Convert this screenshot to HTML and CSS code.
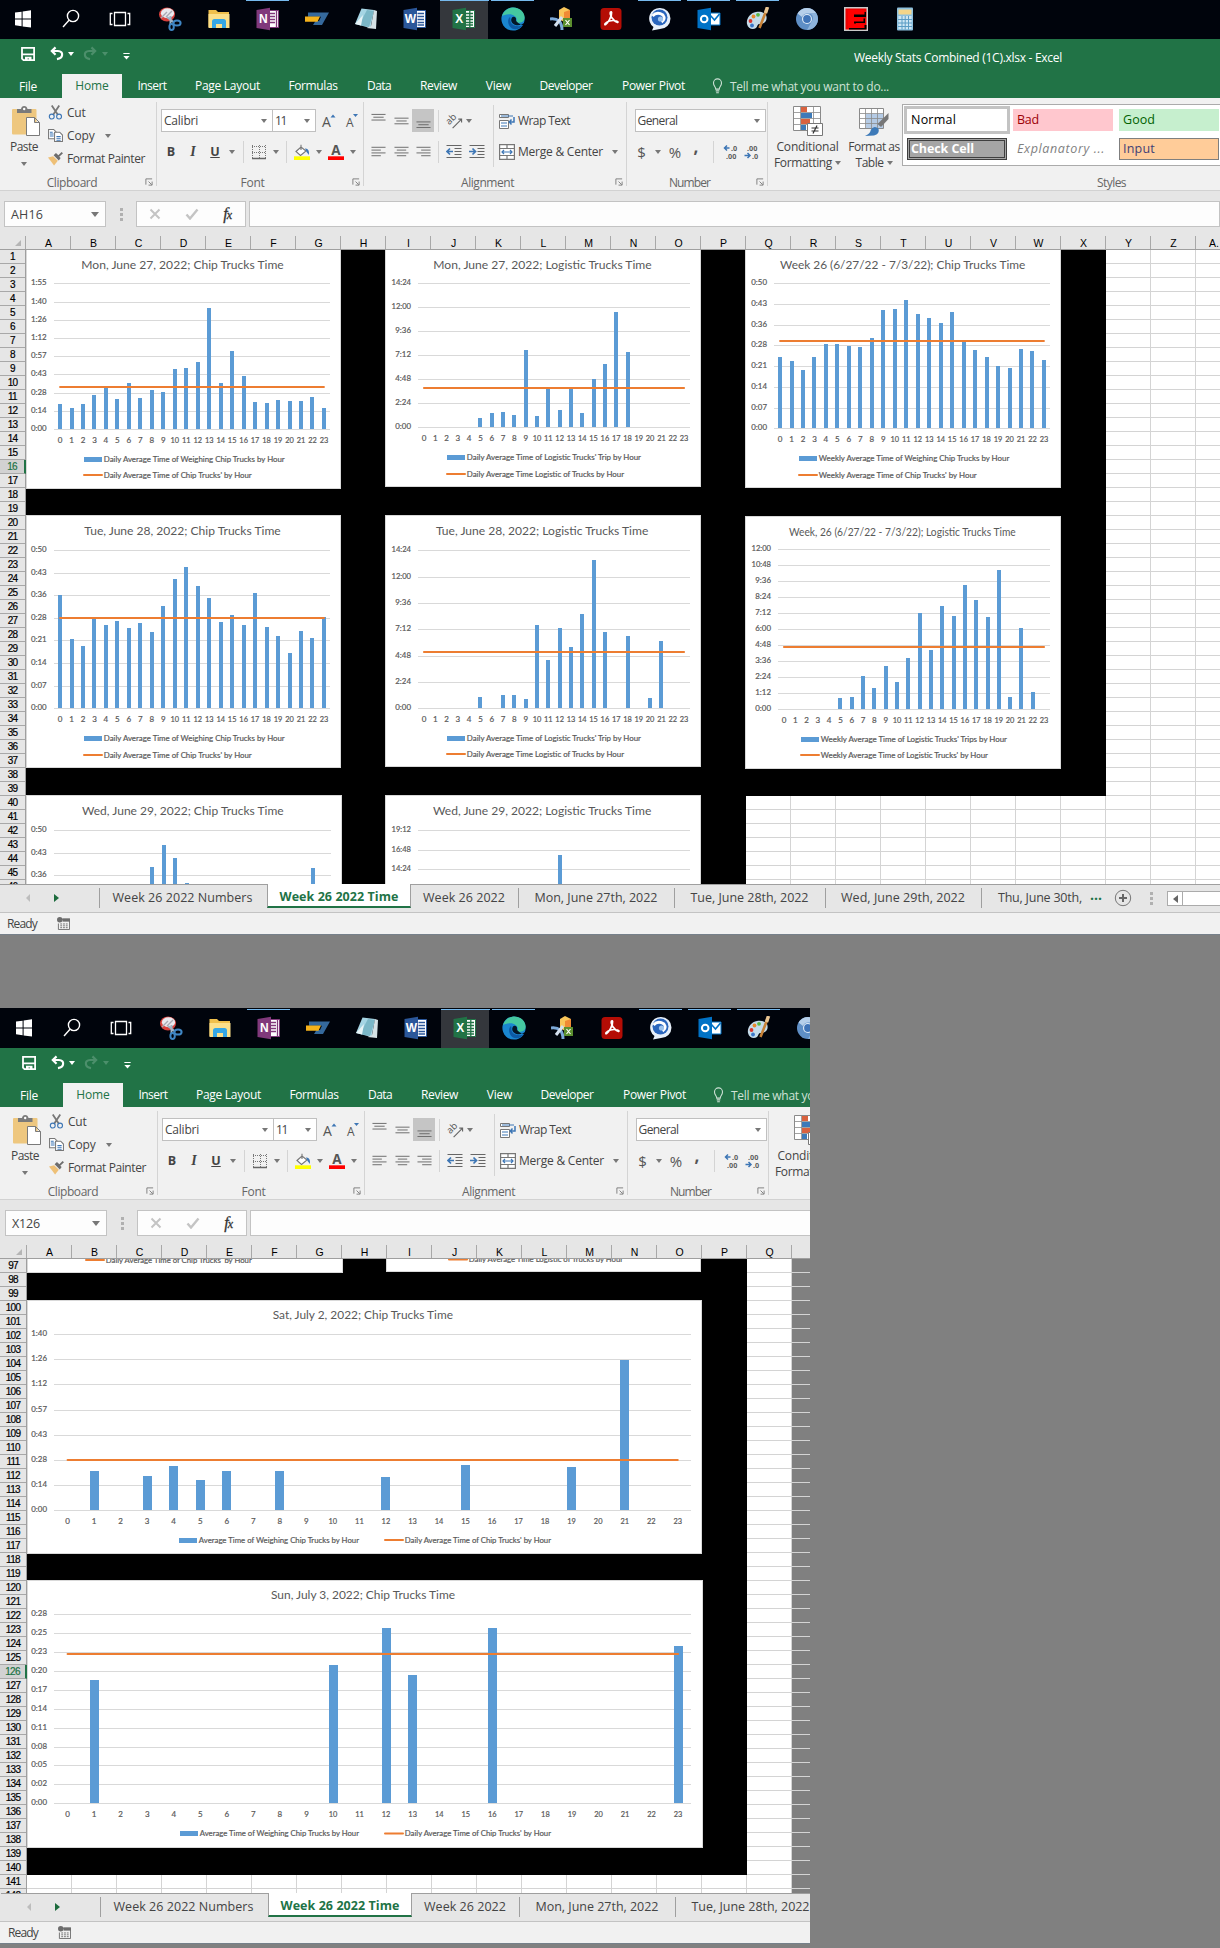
FILE: index.html
```html
<!DOCTYPE html>
<html lang="en">
<head>
<meta charset="utf-8">
<title>Weekly Stats Combined (1C).xlsx - Excel</title>
<link rel="stylesheet" href="styles.css">
</head>
<body>
<svg class="defs" aria-hidden="true">
  <symbol id="t-start" viewBox="0 0 24 24"><path fill="#fff" d="M4 5.6 10.6 4.7V11.4H4ZM11.6 4.5 20 3.3V11.4H11.6ZM4 12.4H10.6V19.2L4 18.3ZM11.6 12.4H20V20.6L11.6 19.4Z"/></symbol>
  <symbol id="t-search" viewBox="0 0 24 24"><g fill="none" stroke="#fff" stroke-width="1.4"><circle cx="14" cy="9" r="5.6"/><path d="M10 13.2 4 20"/></g></symbol>
  <symbol id="t-view" viewBox="0 0 24 24"><g fill="none" stroke="#fff" stroke-width="1.3"><path d="M6.5 5.5H17.5V18.5H6.5ZM4.5 6.5H2.3V17.5H4.5M19.5 6.5H21.7V17.5H19.5"/></g></symbol>
  <symbol id="t-snip" viewBox="0 0 24 24"><ellipse cx="9" cy="7.500" rx="8" ry="7" fill="#d8403c"/><ellipse cx="9.500" cy="6.200" rx="6.600" ry="5" fill="#e9e9ee"/><path d="M3 11 9 5M8 10 14 4" stroke="#a8a8b2" stroke-width="1.400"/><path d="M9 10 16 15.500M12.500 9V18" stroke="#9db4c8" stroke-width="2"/><g fill="none" stroke="#3f86c4" stroke-width="2"><ellipse cx="19" cy="16" rx="3.600" ry="2.600"/><ellipse cx="13.600" cy="20" rx="2.200" ry="3"/></g></symbol>
  <symbol id="t-folder" viewBox="0 0 24 24"><path fill="#f0c04c" d="M1.500 3H9L11 5H22V20H1.500Z"/><path fill="#fce08a" d="M1.500 7H22.500V21H1.500Z"/><path fill="#35a7e6" d="M5 21V14.500Q5 12 7.500 12H16.500Q19 12 19 14.500V21H15V17H9V21Z"/></symbol>
  <symbol id="t-note" viewBox="0 0 24 24"><path fill="#fff" stroke="#80397b" d="M12 3.500H22.500V20.500H12Z"/><path stroke="#80397b" stroke-width="1.300" d="M14 6.500H19M14 9.500H19M14 12.500H19M14 15.500H19M20.500 4V20"/><path fill="#80397b" d="M.5 3 14 .8V23.200L.5 21Z"/><text x="3" y="16.300" class="glyph">N</text></symbol>
  <symbol id="t-dash" viewBox="0 0 24 24"><path fill="#35699c" d="M3 5.500H24L17 18H8L10.500 14H14L16 9.800H3Z"/><path fill="#f5b21b" d="M0 9.500H15L12.500 14.800H0Z"/></symbol>
  <symbol id="t-pad" viewBox="0 0 24 24"><path fill="#a5d5e4" d="M7.500 1.500 20 3 16.500 21 1 17Z"/><path fill="#69a9bb" d="M13 3 20 4 15 20 5 18Z" opacity=".7"/><path fill="#e8f4f7" d="M1 17 9 8 7 18.500Z"/><path fill="#d6e2e6" d="M20 3 23 4 22 22 12.500 21 17 19Z"/></symbol>
  <symbol id="t-word" viewBox="0 0 24 24"><path fill="#fff" stroke="#2b579a" d="M12 3.500H22.500V20.500H12Z"/><path stroke="#2b579a" stroke-width="1.300" d="M14.500 6.500H21M14.500 9.500H21M14.500 12.500H21M14.500 15.500H21M14.500 18H21"/><path fill="#2b579a" d="M.5 3 14 .8V23.200L.5 21Z"/><text x="1.800" y="16" class="glyph">W</text></symbol>
  <symbol id="t-excel" viewBox="0 0 24 24"><path fill="#fff" stroke="#217346" d="M12 3.500H22.500V20.500H12Z"/><path stroke="#217346" stroke-width="1.300" d="M14 6.500H21M14 9.500H21M14 12.500H21M14 15.500H21M14 18H21M17.800 4V20"/><path fill="#217346" d="M.5 3 14 .8V23.200L.5 21Z"/><text x="3.200" y="16.300" class="glyph">X</text></symbol>
  <symbol id="t-edge" viewBox="0 0 24 24"><circle cx="12" cy="12" r="11.600" fill="#1a86d0"/><path fill="#45c8a0" d="M1 9C3 2.500 9 .3 12.500.4 19 .6 24 5.500 23.600 11 23.400 14.500 20 16 17 15.800 14.500 15.600 15.500 14.500 15.800 13 16 10 12 7 8 7.200 4.500 7.500 2 8.500 1 9Z"/><path fill="#0c59a4" d="M9 10C6 12 6.500 18.500 11 21.500 15 23.500 19.500 21.500 21.500 18.500 17 20 11 19 9.700 15 9 13 9.800 11 9 10Z"/><path fill="#00040c" d="M11 10.500C9 13.500 11 17 14.500 18 18 18.800 21.500 17.500 23.800 15.500L24 24 22 18C21 19 14 14.500 15 12.500 15.500 9.500 12 9 11 10.500Z" opacity=".85"/></symbol>
  <symbol id="t-key" viewBox="0 0 24 24"><path fill="#f9c65a" d="M9 3 14 0 20 3V12L14 15 9 12Z"/><path fill="#f08a34" d="M14 5 20 3V12L14 15Z"/><path fill="none" stroke="#7ca9d8" stroke-width="3" d="M0 12C8 11 12 15 12 23"/><path d="M12 10 5 19" stroke="#d4e0ee" stroke-width="3"/><path fill="#5b8f2f" d="M13 11H22V20H13Z"/><path d="M15.500 13 19.500 18M19.500 13 15.500 18" stroke="#fff" stroke-width="1.200"/></symbol>
  <symbol id="t-pdf" viewBox="0 0 24 24"><rect x="1.500" y="1" width="21" height="22" rx="3.500" fill="#b40d05"/><path fill="none" stroke="#fff" stroke-width="1.700" d="M11.500 5C10 8 15 14.500 18.500 15.500 20.500 15 16 12.500 10.500 14 6 15.500 5 18 6.500 17.700 9 16.500 13 9 12.600 5.500Q12.300 4.300 11.500 5"/></symbol>
  <symbol id="t-chat" viewBox="0 0 24 24"><path fill="#e7f0fa" d="M12 1A10.500 10.500 0 0 1 12 22L4 23.500 5.500 20A10.500 10.500 0 0 1 12 1"/><circle cx="11.500" cy="10.500" r="8" fill="#2a66bd"/><path d="M4.500 9Q9 4 15 8 18 12 13.500 15" fill="none" stroke="#fff" stroke-width="2.800"/><circle cx="12.500" cy="12" r="2.600" fill="#9dc3ec"/></symbol>
  <symbol id="t-mail" viewBox="0 0 24 24"><path fill="#fff" stroke="#0072c6" d="M12 6H23V18H12Z"/><path fill="none" stroke="#0072c6" stroke-width="1.600" d="M13 8 17.500 13 22.500 7"/><path fill="#0072c6" d="M.5 3 14 .8V23.200L.5 21Z"/><circle cx="7.200" cy="12" r="3.300" fill="none" stroke="#fff" stroke-width="2"/></symbol>
  <symbol id="t-paint" viewBox="0 0 24 24"><path fill="#c4dcea" d="M10 5C4 6 0 12 1 17 2 22 7 23 10 21 12 19 11 17 14 17 19 17 22 13 20 8 18 5 14 4.500 10 5"/><circle cx="4.500" cy="14" r="1.900" fill="#d8342c"/><circle cx="7.500" cy="9.500" r="1.900" fill="#e8892c"/><circle cx="12" cy="7.800" r="1.900" fill="#5bb747"/><circle cx="6" cy="18.500" r="1.900" fill="#3c78c8"/><path stroke="#c78238" stroke-width="2.600" d="M20.500 3 13.500 21"/><path stroke="#e9c693" stroke-width="3.500" d="M21.500 0 19.500 6"/></symbol>
  <symbol id="t-chrome" viewBox="0 0 24 24"><circle cx="12" cy="12" r="11" fill="#5f8fc6"/><path fill="#b5cfea" d="M2.500 6.500A11 11 0 0 1 21.500 6.500H12A5.500 5.500 0 0 0 7 10Z"/><path fill="#8db3dc" d="M21.500 6.500A11 11 0 0 1 12 23L17 14A5.500 5.500 0 0 0 16 7Z"/><circle cx="12" cy="12" r="5" fill="#e2edf8"/><circle cx="12" cy="12" r="3.900" fill="#3f74b8"/></symbol>
  <symbol id="t-e" viewBox="0 0 24 24"><path fill="#c9c9c9" d="M0 0H24V24H0Z"/><path fill="#e00" d="M1.500 1.500H22.500V22.500H1.500Z"/><path fill="#000" d="M5 5H22V10H12V11.500H21V16H12V18H22.500V22.500H5Z"/><path fill="#f00" d="M4 3H20.500V7.500H10V10H19.500V14.500H10V16.500H20.500V21H4Z"/></symbol>
  <symbol id="t-calc" viewBox="0 0 24 24"><rect x="4" y=".5" width="16" height="23" rx="1" fill="#8ec1df"/><path fill="#cde6f4" d="M5.500 9H18.500V22H5.500Z"/><path fill="#f3d58a" d="M5.500 2.500H18.500V7.500H5.500Z"/><path d="M5 12.500H19M5 16H19M5 19.500H19M9 9V22.500M12.200 9V22.500M15.500 9V22.500" stroke="#5b9cc4"/></symbol>

  <symbol id="q-save" viewBox="0 0 16 16"><path fill="none" stroke="#fff" stroke-width="1.800" d="M2 1.900H14.100V14.100H3.500L2 12.600Z"/><path fill="#fff" d="M2 7.500H14V9.300H2ZM5 10.800H11.500V15H9V12.600H7.500V15H5Z"/></symbol>
  <symbol id="q-undo" viewBox="0 0 16 16"><path fill="none" stroke="currentColor" stroke-width="2.300" d="M7 1.500 3 5.300 7 9.300M3 5.300H9.500C13 5.300 14.200 7.500 14 9.500 13.800 12 12 13.500 8.500 14"/></symbol>
  <symbol id="q-more" viewBox="0 0 10 10"><path fill="#fff" d="M1.500 1H8.500V2.300H1.500ZM1.500 4.500H8.500L5 8.200Z"/></symbol>
  <symbol id="bulb" viewBox="0 0 12 18"><path fill="none" stroke="#cfe2d7" stroke-width="1.200" d="M4 12.500C4 10 1.500 9 1.500 5.500A4.500 4.500 0 0 1 10.500 5.500C10.500 9 8 10 8 12.500ZM4 14.500H8M4.500 16.500H7.500"/></symbol>
  <symbol id="paste" viewBox="0 0 28 30"><rect y="3" width="24.500" height="25.500" rx="1" fill="#eec77f"/><path fill="#7a7a7a" d="M5 7V3H9Q9.500 0 12.200 0T15.500 3H19.500V7Z"/><circle cx="12.200" cy="3" r="1.200" fill="#fff"/><path fill="#fff" stroke="#7a7a7a" d="M14.500 11.500H22.500L27.500 16.500V29.500H14.500ZM22.500 11.500V16.500H27.500"/></symbol>
  <symbol id="cut" viewBox="0 0 16 16"><path d="M4 .5 10.500 10.500M12 .5 5.500 10.500" stroke="#777" stroke-width="1.900"/><circle cx="4" cy="12.300" r="2.600" fill="none" stroke="#3d76b5" stroke-width="1.200"/><circle cx="11.800" cy="12.300" r="2.600" fill="none" stroke="#3d76b5" stroke-width="1.200"/></symbol>
  <symbol id="copy" viewBox="0 0 16 16"><g fill="#fff" stroke="#777" stroke-width="1.100"><path d="M.6 1.500H6L8.500 4V11.500H.6Z"/><path d="M7 4.500H12.500L15.400 7.500V14.500H7Z"/></g><path stroke="#3d76b5" stroke-width="1.100" d="M2 4.500H5M2 6.500H6M2 8.500H6M9 9H13.500M9 11H13.500M9 13H13.500"/></symbol>
  <symbol id="brush" viewBox="0 0 16 16"><path fill="#eec077" d="M0 7 5.500 5.500 10.500 10.500 6.500 15.500Z"/><path fill="#6d6d6d" d="M6 4.500 8.500 2 11 4.500 14.500 1 16 2.500 12 6 13.500 7.500 11.500 10Z"/></symbol>
  <symbol id="launch" viewBox="0 0 9 9"><path fill="none" stroke="#777" d="M1 7.500V1H8M4 4 7.500 7.500M8 4V8H4"/></symbol>
  <symbol id="grow" viewBox="0 0 16 16"><text x="1" y="14" font-size="14" class="let">A</text><path fill="#3d76b5" d="M9.500 4.500 12 1.500 14.500 4.500Z"/></symbol>
  <symbol id="shrink" viewBox="0 0 16 16"><text x="2" y="14" font-size="12" class="let">A</text><path fill="#3d76b5" d="M9 1H14L11.500 4Z"/></symbol>
  <symbol id="borders" viewBox="0 0 16 16"><path stroke="#777" stroke-dasharray="1 1" d="M1 2.500H15M1 8.500H15M1.500 1V14M8.500 1V14M14.500 1V14"/><path stroke="#666" stroke-width="1.500" d="M1 14.500H15"/></symbol>
  <symbol id="fill" viewBox="0 0 16 16"><path fill="#fff" stroke="#777" stroke-width="1.100" d="M2 7.500 7 3 12 7 6.500 11.500ZM7 6V.8"/><path fill="#3d76b5" d="M11 4.500Q15.500 4 15 11Q12 8 11 4.500"/><path fill="#ff0" d="M0 12.300H16V16H0Z"/></symbol>
  <symbol id="fcolor" viewBox="0 0 16 16"><text x="3.200" y="11" font-size="13.500" class="let b">A</text><path fill="#f00" d="M0 12.300H16V16H0Z"/></symbol>
  <symbol id="al-t" viewBox="0 0 16 16"><path stroke="#666" d="M.5 1.500H15.500M2.500 4.500H13.500M.5 7.500H15.500"/></symbol>
  <symbol id="al-m" viewBox="0 0 16 16"><path stroke="#666" d="M.5 5.500H15.500M2.500 8.500H13.500M.5 11.500H15.500"/></symbol>
  <symbol id="al-b" viewBox="0 0 16 16"><path stroke="#666" d="M.5 9.500H15.500M2.500 12.500H13.500M.5 15.500H15.500"/></symbol>
  <symbol id="al-l" viewBox="0 0 16 16"><path stroke="#666" d="M.5 3.500H15.500M.5 6.500H10.500M.5 9.500H15.500M.5 12.500H10.500"/></symbol>
  <symbol id="al-c" viewBox="0 0 16 16"><path stroke="#666" d="M.5 3.500H15.500M3 6.500H13M.5 9.500H15.500M3 12.500H13"/></symbol>
  <symbol id="al-r" viewBox="0 0 16 16"><path stroke="#666" d="M.5 3.500H15.500M5.500 6.500H15.500M.5 9.500H15.500M5.500 12.500H15.500"/></symbol>
  <symbol id="orient" viewBox="0 0 18 16"><text x="0" y="0" font-size="10" class="let" transform="translate(3.500 12.500) rotate(-45)">ab</text><path fill="none" stroke="#666" stroke-width="1.200" d="M7 15.500 16.500 6M13 6H16.500V9.500"/></symbol>
  <symbol id="outdent" viewBox="0 0 16 16"><path stroke="#666" d="M.5 1.500H15.500M8.500 4.500H15.500M8.500 7.500H15.500M8.500 10.500H15.500M.5 13.500H15.500"/><path fill="none" stroke="#3d76b5" stroke-width="1.700" d="M7 7.500H1.500M4 4.500 1 7.500 4 10.500"/></symbol>
  <symbol id="indent" viewBox="0 0 16 16"><path stroke="#666" d="M.5 1.500H15.500M8.500 4.500H15.500M8.500 7.500H15.500M8.500 10.500H15.500M.5 13.500H15.500"/><path fill="none" stroke="#3d76b5" stroke-width="1.700" d="M0 7.500H6M3.500 4.500 6.500 7.500 3.500 10.500"/></symbol>
  <symbol id="wrap" viewBox="0 0 16 16"><path fill="#fff" stroke="#777" d="M.5 1.500H9.500V4.500H.5ZM.5 7.500H9.500V15.500H.5Z"/><path stroke="#3d76b5" d="M2 3H14M2 10H8M2 13H8"/><path fill="none" stroke="#3d76b5" stroke-width="1.500" d="M15 4V9H10.500M12.500 6.500 10.300 9 12.500 11.500"/></symbol>
  <symbol id="merge" viewBox="0 0 16 16"><path fill="#fff" stroke="#777" stroke-width="1.200" d="M.6.6H15.400V15.400H.6ZM.6 4.500H15.400M.6 11.500H15.400M8 .6V4.500M8 11.500V15.400"/><path fill="none" stroke="#3d76b5" stroke-width="1.200" d="M3 8H13M5 6 3 8 5 10M11 6 13 8 11 10"/></symbol>
  <symbol id="dec-up" viewBox="0 0 16 16"><text x="8" y="7" class="num">.0</text><text x="3" y="15" class="num">.00</text><path fill="none" stroke="#3d76b5" stroke-width="1.500" d="M6.500 4H1.500M4 1.500 1.500 4 4 6.500"/></symbol>
  <symbol id="dec-dn" viewBox="0 0 16 16"><text x="3" y="7" class="num">.00</text><text x="8" y="15" class="num">.0</text><path fill="none" stroke="#3d76b5" stroke-width="1.500" d="M.5 11.500H6M3.500 9 6 11.500 3.500 14"/></symbol>
  <symbol id="cond" viewBox="0 0 30 30"><path fill="#fff" stroke="#8a8a8a" d="M.5.5H27.500V24.500H.5Z"/><path fill="#d9623f" d="M8 1H14V6H8ZM8 13H17V18H8Z"/><path fill="#3d7ab8" d="M8 7H19V12H8ZM8 19H13V24H8Z"/><path stroke="#8a8a8a" stroke-width=".8" d="M7.500 0V25M20.500 0V25M0 6.500H28M0 12.500H28M0 18.500H28"/><path fill="#fff" stroke="#777" d="M14.500 17.500H29.500V29.500H14.500Z"/><path d="M18.500 22H25.500M18.500 25H25.500M24 19.500 20 27.500" stroke="#333" stroke-width="1.200"/></symbol>
  <symbol id="fmt" viewBox="0 0 30 30"><path fill="#fff" stroke="#8a8a8a" d="M.5 2.500H24.500V22.500H.5Z"/><path fill="#b5cbe5" d="M7 8H24V22H7Z"/><path stroke="#8a8a8a" stroke-width=".8" d="M6.500 2V23M12.500 2V23M18.500 2V23M0 7.500H25M0 12.500H25M0 17.500H25"/><path fill="#777" d="M29.500 7V13L22 21 18.500 18Z"/><path fill="#3d7ab8" d="M6 30Q11 28 12 23.500 15 19 19.500 22.500 21 28 15 29.500Z"/></symbol>
  <symbol id="nofx" viewBox="0 0 12 12"><path d="M1.500 1.500 10.500 10.500M10.500 1.500 1.500 10.500" stroke="#c4c4c4" stroke-width="2"/></symbol>
  <symbol id="okfx" viewBox="0 0 14 12"><path fill="none" d="M1.500 6.500 5 10.500 12.500 1.500" stroke="#c4c4c4" stroke-width="2.400"/></symbol>
  <symbol id="macro" viewBox="0 0 14 14"><path fill="none" stroke="#6d6d6d" d="M4 2.500H13.500V13.500H1.500V7"/><path fill="#6d6d6d" d="M6 1.500H14V5H6Z"/><circle cx="3" cy="3" r="3" fill="#6d6d6d"/><path stroke="#6d6d6d" stroke-dasharray="2 1" d="M3.500 7.500H12M3.500 9.500H12M3.500 11.500H12"/></symbol>
  <symbol id="plus" viewBox="0 0 18 18"><circle cx="9" cy="9" r="7.700" fill="none" stroke="#777"/><path d="M9 5V13M5 9H13" stroke="#666" stroke-width="2"/></symbol>
</svg>
<section class="window first" data-cell="AH16"></section>
<section class="window second" data-cell="X126"></section>
<script src="app.js"></script>
</body>
</html>
```
FILE: styles.css
```css
* { box-sizing: border-box; }
body { margin: 0; background: #808080; font: 12px "Open Sans", "Noto Sans", sans-serif; color: #444; width: 1220px; height: 1948px; overflow: hidden; }
.defs { display: none; }
svg { display: block; flex: none; }
.window { --dx: 0px; width: 1220px; height: 935px; overflow: hidden; border-bottom: 1px solid #76808a; }
.window.second { --dx: 1px; width: 810px; height: 936px; margin-top: 73px; padding-top: 1px; background: #00040c; }
.fit { white-space: nowrap; display: inline-block; }
.glyph { font: bold 12px "Liberation Sans", sans-serif; fill: #fff; }
.let { font-family: "Open Sans", sans-serif; fill: #555; }
.let.b { font-weight: bold; }
.num { font: bold 7.500px "Liberation Sans", sans-serif; fill: #555; }
.caret { width: 0; height: 0; border: 3px solid transparent; border-top: 4px solid #777; border-bottom: 0; flex: none; }

.taskbar { display: flex; height: 39px; background: #00040c; padding-left: var(--dx); }
.slot { width: 49px; flex: none; display: flex; justify-content: center; align-items: center; border-top: 1px solid transparent; padding-right: 1px; }
.slot.sys { width: 48.300px; padding-right: 3px; }
.slot.sys:nth-child(3) { width: 49.400px; }
.slot.open { border-image: linear-gradient(90deg, transparent 3px, #76b9ed 3px, #76b9ed 44px, transparent 44px) 1; border-width: 1px 0 0; border-style: solid; }
.slot.active { background: linear-gradient(#34373c, #34373c) 0 0 / 48px 100% no-repeat; border-top-color: #76b9ed; }
.slot svg { width: 24px; height: 24px; margin-top: -2px; }

.title { display: flex; height: 35px; background: #217346; padding-left: calc(20px + var(--dx)); align-items: flex-start; color: #fff; }
.title svg { margin-top: 7px; }
.title .undo { margin-left: 13px; }
.title .redo { margin-left: 9px; transform: scaleX(-1); color: #4c8f6b; }
.title .caret { margin: 13px 0 0 4px; border-top-color: #fff; }
.title .caret.dim { border-top-color: #4c8f6b; }
.title .more { margin: 13px 0 0 14px; }
.title .name { margin: 10px 0 0 723px; }

.menu { display: flex; height: 24px; background: #217346; color: #fff; padding-left: var(--dx); align-items: center; }
.menu > span { flex: none; text-align: center; height: 24px; line-height: 23px; }
.menu > .file { padding-right: 6px; line-height: 25px; }
.menu .home { background: #f1f1f1; color: #217346; }
.menu .tell { display: flex; gap: 7px; align-items: center; margin-left: 12px; color: #cfe2d7; }

.ribbon { display: flex; height: 93px; background: #f1f1f1; border-bottom: 1px solid #d2d2d2; padding-left: var(--dx); }
.group { flex: none; display: flex; flex-direction: column; position: relative; padding-top: 7px; }
.group::after { content: ""; position: absolute; right: 0; top: 4px; bottom: 4px; width: 1px; background: #d4d4d4; }
.group .body { height: 69px; }
.group .cap { height: 16px; line-height: 15px; display: flex; align-items: center; color: #666; }
.group .cap .lab { flex: 1; text-align: center; }
.group .cap svg { margin-right: 4px; }
.clip { width: 157px; } .font { width: 207px; } .align { width: 263px; } .number { width: 141px; } .styles { width: 560px; }
.clip .cap .lab { padding-right: 1px; }
.styles .cap .lab { padding-left: 127px; }
.number .cap .lab, .font .cap .lab, .align .cap .lab { padding-right: 4px; }
.clip .body { display: flex; }
.paste { width: 48px; display: flex; flex-direction: column; align-items: center; padding-top: 1px; }
.paste svg { margin-left: 4px; }
.paste .fit { line-height: 16px; margin-top: 3px; }
.paste .caret { margin-top: 7px; }
.clip .list { display: grid; grid-template-rows: repeat(3, 23px); margin-top: -4px; }
.clip .list div { display: flex; align-items: center; gap: 4px; }
.clip .list .caret { margin-left: 6px; }
.row { display: grid; height: 31px; align-items: center; justify-items: center; }
.vd { width: 1px; height: 22px; background: #d4d4d4; }
.vd.tall { height: 31px; }
.combos { grid-template-columns: 112px 43px 26px 20px; padding-left: 4px; }
.combo { height: 23px; border: 1px solid #c0c0c0; background: #fff; width: 100%; display: flex; align-items: center; justify-content: space-between; padding: 0 5px 0 2px; }
.combos .combo + .combo { border-left: 0; }
.biu { grid-template-columns: 22px 22px 22px 12px 10px 22px 11px 10px 22px 11px 24px 10px; padding-left: 3px; color: #444; }
.biu b, .biu i, .biu u { font-size: 12.500px; font-weight: bold; }
.biu i { font-family: "Liberation Serif", serif; font-size: 14px; }
.al { grid-template-columns: 23px 22px 22px 8px 24px 22px 10px auto; padding-left: 3px; justify-content: start; }
.al .on { background: #c5c5c5; height: 23px; width: 22px; display: grid; place-items: center; }
.al .first-caret { justify-self: start; }
.al .txt { display: flex; align-items: center; gap: 3px; padding-left: 1px; justify-self: start; }
.al .txt .caret { margin-left: 6px; }
.number .body { padding-left: 4px; }
.number .combo { width: 131px; margin-left: 1px; }
.nums { grid-template-columns: 21px 12px 22px 20px 14px 22px 20px; justify-content: start; }
.nums .sym { font-size: 15px; line-height: 20px; color: #555; }
.nums b.sym { margin-top: -9px; font-size: 17px; }
.styles .body { display: flex; }
.big { display: flex; flex-direction: column; align-items: center; padding-top: 1px; line-height: 16px; }
.big.c { width: 79px; } .big.f { width: 54px; margin-right: 1px; }
.big svg { margin-bottom: 3px; }
.big div { display: flex; align-items: center; gap: 3px; white-space: nowrap; }
.gallery { display: grid; grid-template-columns: 106px 106px 106px; grid-template-rows: 29px 29px; border: 1px solid #ababab; background: #fff; height: 62px; padding: 1px 0 0 1px; margin-top: -1px; flex: 1; }
.gallery > div { margin: 3px; height: 22px; line-height: 21px; padding-left: 4px; font-size: 12.500px; color: #000; width: 100px; white-space: nowrap; }
.gallery .normal { outline: 3px solid #c3c3c3; }
.gallery .bad { background: #ffc7ce; color: #9c0006; }
.gallery .good { background: #c6efce; color: #006100; }
.gallery .check { background: #a5a5a5; color: #fff; font-weight: bold; border: 3px double #3f3f3f; line-height: 16px; padding-left: 1px; }
.gallery .expl { color: #7f7f7f; font-style: italic; }
.gallery .input { background: #fc9; color: #3f3f76; border: 1px solid #7f7f7f; line-height: 19px; padding-left: 3px; }

.formula { display: flex; height: 45px; padding: 10px 0 0 calc(4px + var(--dx)); background: #e6e6e6; }
.formula > div { height: 26px; background: #fdfdfd; border: 1px solid #c3c3c3; flex: none; display: flex; align-items: center; }
.formula .cell { width: 102px; justify-content: space-between; padding: 0 6px; font-size: 12.500px; }
.formula .cell .caret { border-width: 4px 4px 0; border-top-width: 5px; }
.formula .grip { width: 30px; background: none; border: 0; justify-content: center; }
.grip i { width: 3px; height: 13px; background: repeating-linear-gradient(#b0b0b0 0 3px, transparent 3px 5px); }
.formula .fx { width: 110px; justify-content: space-between; padding: 0 13px 0 12px; margin-right: 3px; }
.fx em { font: italic 16px "Liberation Serif", serif; color: #333; -webkit-text-stroke: .3px #333; }
.fx em small { font-size: 12px; margin-left: -1px; }
.formula .line { flex: 1 0 900px; }

.cols { display: flex; height: 14px; background: #e6e6e6; border-bottom: 1px solid #9f9f9f; font: 10.500px/15px "Liberation Sans", Arial, sans-serif; color: #000; }
.cols span { width: 45px; flex: none; text-align: center; border-right: 1px solid #a8a8a8; padding-left: 1px; }
.cols .corner { width: calc(26px + var(--dx)); display: flex; justify-content: flex-end; align-items: center; padding-right: 4px; }
.corner i { border: 3px solid transparent; border-right-color: #b5b5b5; border-bottom-color: #b5b5b5; }
.cols .last { border-right: 0; width: 25px; text-align: right; padding-right: 2px; }

.grid { display: flex; height: 634px; overflow: hidden; }
.rows { width: calc(26px + var(--dx)); flex: none; border-right: 1px solid #9f9f9f; background: #e6e6e6; font: 10px/14px "Liberation Sans", Arial, sans-serif; color: #000; letter-spacing: -.7px; -webkit-text-stroke: .2px; }
.rows div { height: 14px; border-bottom: 1px solid #a8a8a8; text-align: center; }
.rows .cur { background: #d2d2d2; color: #217346; border-right: 2px solid #217346; margin-right: -1px; }
.sheet { position: relative; flex: 1; overflow: hidden; background: repeating-linear-gradient(transparent 0 13px, #d4d4d4 13px 14px), repeating-linear-gradient(90deg, #fff 0 44px, #d4d4d4 44px 45px); }
.fillblock { position: absolute; background: #000; }
.outside { position: absolute; left: 765px; top: 0; width: 18px; height: 634px; background: repeating-linear-gradient(#808080 0 13px, #d4d4d4 13px 14px); }
.chart { position: absolute; background: #fff; font-family: Lato, "Open Sans", sans-serif; }
.chart text { fill: #595959; }
.chart .t { font-size: 12px; }
.chart .s { font-size: 8px; stroke: #595959; stroke-width: .2px; }
.chart .g { stroke: #d9d9d9; shape-rendering: crispEdges; }
.chart .bar { fill: #5b9bd5; shape-rendering: crispEdges; }
.chart .avg { stroke: #ed7d31; stroke-width: 2; stroke-linecap: round; }
.chart .frame { fill: none; stroke: #d9d9d9; }

.tabs { display: flex; height: 28px; background: #e6e6e6; padding-left: var(--dx); font-size: 12.500px; }
.tabs > * { flex: none; border-top: 1px solid #9f9f9f; height: 28px; }
.nav { width: 100px; display: flex; align-items: flex-start; }
.nav i { border: 4px solid transparent; margin-top: 9px; }
.nav .p { border-right-color: #bdbdbd; border-left: 0; margin-left: 26px; }
.nav .n { border-left: 5px solid #1c6b3d; border-right: 0; margin-left: 24px; }
.tab { text-align: center; display: flex; justify-content: center; line-height: 25px; position: relative; padding-right: 2px; }
.tab.sep::before { content: ""; position: absolute; left: -1px; top: 3px; width: 1px; height: 20px; background: #9f9f9f; }
.tabs .tab.sel { background: #fff; color: #217346; font-weight: bold; height: 24px; border: 0 solid #9f9f9f; border-width: 0 1px; border-bottom: 2px solid #217346; line-height: 26px; padding: 0; }
.tabs .tab.cut { justify-content: flex-start; padding: 0 0 0 16px; }
.dots { width: 26px; color: #217346; font-weight: bold; font-size: 14px; line-height: 20px; padding-left: 5px; }
.add { width: 28px; padding: 4px 0 0 3px; }
.tabs .grip { width: 28px; padding: 7px 0 0 11px; }
.tabs .grip i { display: block; }
.scroll { width: 60px; padding-top: 6px; display: flex; }
.scroll span { height: 15px; border: 1px solid #ababab; background: #fff; width: 16px; display: grid; place-items: center; }
.scroll span + span { width: 44px; margin-left: -1px; }
.scroll i { border: 4px solid transparent; border-right: 5px solid #666; border-left: 0; }
.status { display: flex; align-items: center; height: 22px; background: #f1f1f1; border-top: 1px solid #c3c3c3; padding-left: calc(7px + var(--dx)); gap: 20px; }
```
FILE: app.js
```js
const icon = (id, w = 16, h = w, cls = '') => `<svg class="${cls}" width="${w}" height="${h}"><use href="#${id}"/></svg>`;
const label = (text, w) => `<span class="fit" data-w="${w}">${text}</span>`;
const caret = '<i class="caret"></i>';

const apps = [['snip'], ['folder'], ['note', 'open'], ['dash'], ['pad'], ['word'], ['excel', 'active'], ['edge', 'open'], ['key'], ['pdf'],
  ['chat', 'open'], ['mail', 'open'], ['paint', 'open'], ['chrome'], ['e'], ['calc']];
const taskbar = count => `<div class="taskbar">${['start', 'search', 'view'].map(n => `<div class="slot sys">${icon('t-' + n)}</div>`).join('')}
  ${apps.slice(0, count).map(([n, c = '']) => `<div class="slot ${c}">${icon('t-' + n)}</div>`).join('')}</div>`;

const title = full => `<div class="title">${icon('q-save')}${icon('q-undo', 15, 15, 'undo')}${caret}${icon('q-undo', 15, 15, 'redo')}<i class="caret dim"></i>${icon('q-more', 9, 9, 'more')}
  ${full ? `<span class="name">${label('Weekly Stats Combined (1C).xlsx - Excel', 208)}</span>` : ''}</div>`;

const menus = [['File', 62, 18], ['Home', 60, 33.5], ['Insert', 60, 29], ['Page Layout', 91, 65], ['Formulas', 80, 49], ['Data', 52, 24],
  ['Review', 67, 37], ['View', 53, 25.5], ['Developer', 82, 53], ['Power Pivot', 93, 63]];
const menu = () => `<div class="menu">${menus.map(([t, w, tw]) => `<span class="${t.toLowerCase().replace(' ', '-')}" style="width:${w}px">${label(t, tw)}</span>`).join('')}
  <span class="tell">${icon('bulb', 11, 16)}${label('Tell me what you want to do...', 159)}</span></div>`;

const cap = (t, w, l = true) => `<div class="cap"><span class="lab">${label(t, w)}</span>${l ? icon('launch', 8) : ''}</div>`;
const gallery = () => `<div class="big f">${icon('fmt', 30)}<div>${label('Format as', 51.5)}</div><div>${label('Table', 28)}${caret}</div></div>
    <div class="gallery"><div class="normal">${label('Normal', 45)}</div><div class="bad">${label('Bad', 22)}</div><div class="good">${label('Good', 32)}</div>
      <div class="check">${label('Check Cell', 63)}</div><div class="expl">${label('Explanatory ...', 88)}</div><div class="input">${label('Input', 32)}</div></div>`;
const ribbon = full => `<div class="ribbon">
  <div class="group clip"><div class="body">
    <div class="paste">${icon('paste', 28, 30)}${label('Paste', 28)}${caret}</div>
    <div class="list"><div>${icon('cut', 15)}${label('Cut', 18.5)}</div><div>${icon('copy', 15)}${label('Copy', 27.5)}${caret}</div><div>${icon('brush', 15)}${label('Format Painter', 78)}</div></div>
  </div>${cap('Clipboard', 50.5)}</div>
  <div class="group font"><div class="body">
    <div class="row combos"><div class="combo">${label('Calibri', 34)}${caret}</div><div class="combo">${label('11', 11)}${caret}</div>${icon('grow')}${icon('shrink')}</div>
    <div class="row biu"><b>B</b><i>I</i><u>U</u>${caret}<span class="vd"></span>${icon('borders')}${caret}<span class="vd"></span>${icon('fill')}${caret}${icon('fcolor')}${caret}</div>
  </div>${cap('Font', 24)}</div>
  <div class="group align"><div class="body">
    <div class="row al">${icon('al-t', 15)}${icon('al-m', 15)}<span class="on">${icon('al-b', 15)}</span><span class="vd"></span>${icon('orient', 17, 16)}<i class="caret first-caret"></i><span class="vd tall"></span><span class="txt">${icon('wrap')}${label('Wrap Text', 52)}</span></div>
    <div class="row al">${icon('al-l', 15)}${icon('al-c', 15)}${icon('al-r', 15)}<span class="vd"></span>${icon('outdent')}${icon('indent')}<span class="vd tall"></span><span class="txt">${icon('merge')}${label('Merge &amp; Center', 85)}${caret}</span></div>
  </div>${cap('Alignment', 53)}</div>
  <div class="group number"><div class="body">
    <div class="row"><div class="combo">${label('General', 40)}${caret}</div></div>
    <div class="row nums"><span class="sym">$</span>${caret}<span class="sym">%</span><b class="sym">,</b><span class="vd"></span>${icon('dec-up')}${icon('dec-dn')}</div>
  </div>${cap('Number', 41)}</div>
  <div class="group styles"><div class="body">
    <div class="big c">${icon('cond', 30)}<div>${label('Conditional', 62)}</div><div>${label('Formatting', 58)}${caret}</div></div>
    ${full ? gallery() : ''}
  </div>${full ? cap('Styles', 29, false) : ''}</div></div>`;

const formula = (cell, w) => `<div class="formula"><div class="cell">${label(cell, w)}${caret}</div><div class="grip"><i></i></div>
  <div class="fx">${icon('nofx', 12)}${icon('okfx', 14, 12)}<em>f<small>x</small></em></div><div class="line"></div></div>`;

const letters = 'ABCDEFGHIJKLMNOPQRSTUVWXYZ'.split('');
const cols = (names, last) => `<div class="cols"><span class="corner"><i></i></span>${names.map(n => `<span>${n}</span>`).join('')}<span class="last">${last}</span></div>`;
const rows = (from, current) => `<div class="rows">${Array.from({ length: 46 }, (_, i) => from + i).map(n => `<div class="${n === current ? 'cur' : ''}">${n}</div>`).join('')}</div>`;

const text = (s, x, y, cls, anchor = 'start', len = 0) =>
  `<text class="${cls}" x="${x}" y="${y}" text-anchor="${anchor}"${len ? ` textLength="${len}" lengthAdjust="spacingAndGlyphs"` : ''}>${s}</text>`;

// Chart geometry is given in page pixels; [ox, oy] is the page position of the sheet's first cell.
// Labels below the sheet's visible area are left out.
function chart(c, [ox, oy]) {
  const [x, y, w, h] = c.box, bottomEdge = oy + 634;
  let out = `<rect class="frame" x="${x + .5}" y="${y + .5}" width="${w - 1}" height="${h - 1}"/>`;
  if (c.title) out += text(c.title, c.tx[0], c.ty + 4.3, 't', 'start', c.tx[1] - c.tx[0]);
  if (c.plot) {
    const [l, t, r, b] = c.plot, n = c.ticks.length - 1, step = (r - l) / 24, bw = c.bw || 4;
    c.ticks.forEach((v, i) => {
      const gy = Math.round(b - (b - t) * i / n - .6) + .5;
      if (gy < bottomEdge) out += `<line class="g" x1="${l}" x2="${r}" y1="${gy}" y2="${gy}"/>` + text(v, c.lx, gy + 1.9, 's', 'end', v.length > 4 ? 19.5 : 15.7);
    });
    for (let i = 0; i < 24; i++) {
      const cx = l + step * (i + .5), v = c.bars[i];
      if (v) out += `<rect class="bar" x="${Math.round(cx - bw / 2)}" y="${Math.floor(b) - v}" width="${bw}" height="${v}"/>`;
      if (b < bottomEdge) out += text(i, cx, b + 13.2, 's', 'middle', i > 9 ? 8.6 : 0);
    }
    out += `<line class="avg" x1="${l + step / 2}" x2="${r - step / 2}" y1="${c.avg}" y2="${c.avg}"/>`;
  }
  (c.legend || []).forEach(([name, lx, ly, end, bar]) => {
    out += bar ? `<rect class="bar" x="${lx}" y="${Math.round(ly - 2.5)}" width="18" height="5"/>` : `<line class="avg" x1="${lx}" x2="${lx + 18}" y1="${ly}" y2="${ly}"/>`;
    out += text(name, lx + 19.8, ly + 2.6, 's', 'start', end - lx - 19.8);
  });
  return `<svg class="chart" style="left:${x - ox}px;top:${y - oy}px" width="${w}" height="${h}" viewBox="${x} ${y} ${w} ${h}">${out}</svg>`;
}

const DW = 'Daily Average Time of Weighing Chip Trucks by Hour', DC = "Daily Average Time of Chip Trucks' by Hour";
const LT = "Daily Average Time of Logistic Trucks' Trip by Hour", LA = 'Daily Average Time Logistic of Trucks by Hour';
const AW = 'Average Time of Weighing Chip Trucks by Hour';
const fifty = ['0:00', '0:07', '0:14', '0:21', '0:28', '0:36', '0:43', '0:50'];
const fourteen = ['0:00', '2:24', '4:48', '7:12', '9:36', '12:00', '14:24'];
const at = o => Array.from({ length: 24 }, (_, i) => o[i] || 0);

const week = [
  { box: [26, 249, 315, 240], title: 'Mon, June 27, 2022; Chip Trucks Time', tx: [81.3, 283.7], ty: 265, plot: [54.3, 284, 329.7, 429.5], lx: 46.7, avg: 387,
    ticks: ['0:00', '0:14', '0:28', '0:43', '0:57', '1:12', '1:26', '1:40', '1:55'],
    bars: [25, 21, 25, 34, 42, 30, 46, 31, 39, 37, 60, 61, 67, 121, 46, 78, 53, 27, 26, 29, 28, 28, 32, 21],
    legend: [[DW, 84, 459.3, 284.7, 1], [DC, 84, 475, 251.7]] },
  { box: [385, 249, 316, 238], title: 'Mon, June 27, 2022; Logistic Trucks Time', tx: [433.3, 651.7], ty: 265, plot: [418.3, 284, 689.7, 427.8], lx: 411, avg: 388,
    ticks: fourteen, bars: at({ 5: 9, 6: 14, 7: 15, 8: 12, 9: 77, 10: 11, 11: 39, 12: 17, 13: 39, 14: 14, 15: 48, 16: 63, 17: 115, 18: 75 }),
    legend: [[LT, 447, 457.3, 641, 1], [LA, 447, 474, 624]] },
  { box: [745, 249, 316, 239], title: 'Week 26 (6/27/22 - 7/3/22); Chip Trucks Time', tx: [780, 1025.3], ty: 265, plot: [774.3, 284, 1049.7, 428.8], lx: 767, avg: 341,
    ticks: fifty, bars: [71, 67, 58, 71, 84, 84, 82, 81, 90, 118, 119, 128, 114, 110, 105, 116, 86, 78, 71, 62, 60, 79, 77, 68],
    legend: [['Weekly Average Time of Weighing Chip Trucks by Hour', 799, 458.7, 1009.3, 1], ["Weekly Average Time of Chip Trucks' by Hour", 799, 475, 976.7]] },
  { box: [26, 515, 315, 253], title: 'Tue, June 28, 2022; Chip Trucks Time', tx: [84.3, 280.7], ty: 531, plot: [54.3, 550.8, 329.7, 708.8], lx: 46.7, avg: 618,
    ticks: fifty, bars: [113, 69, 62, 89, 83, 87, 80, 85, 76, 102, 129, 141, 122, 110, 86, 93, 83, 115, 81, 72, 55, 77, 70, 91],
    legend: [[DW, 84, 738.3, 284.7, 1], [DC, 84, 755, 251.7]] },
  { box: [385, 515, 316, 252], title: 'Tue, June 28, 2022; Logistic Trucks Time', tx: [436, 648.3], ty: 531, plot: [418.3, 550.8, 689.7, 708.8], lx: 411, avg: 652,
    ticks: fourteen, bars: at({ 5: 11, 7: 13, 8: 13, 9: 9, 10: 83, 11: 48, 12: 80, 13: 61, 14: 94, 15: 148, 16: 76, 18: 72, 20: 10, 21: 67 }),
    legend: [[LT, 447, 738.3, 641, 1], [LA, 447, 754, 624]] },
  { box: [745, 516, 316, 253], title: 'Week, 26 (6/27/22 - 7/3/22); Logistic Trucks Time', tx: [789, 1015.7], ty: 532, plot: [778.3, 549.8, 1049.7, 709.8], lx: 771, avg: 647,
    ticks: ['0:00', '1:12', '2:24', '3:36', '4:48', '6:00', '7:12', '8:24', '9:36', '10:48', '12:00'],
    bars: at({ 5: 11, 6: 12, 7: 33, 8: 21, 9: 43, 10: 27, 11: 51, 12: 96, 13: 59, 14: 103, 15: 93, 16: 124, 17: 109, 18: 92, 19: 139, 20: 12, 21: 81, 22: 17 }),
    legend: [["Weekly Average Time of Logistic Trucks' Trips by Hour", 801, 739.3, 1007, 1], ["Weekly Average Time of Logistic Trucks' by Hour", 801, 755, 988]] },
  { box: [26, 795, 316, 100], title: 'Wed, June 29, 2022; Chip Trucks Time', tx: [82, 283.7], ty: 811, plot: [54.3, 830.8, 330.7, 988.8], lx: 46.7, avg: 960,
    ticks: fifty, bars: at({ 8: 121, 9: 143, 10: 130, 11: 105, 22: 120 }) },
  { box: [385, 795, 316, 100], title: 'Wed, June 29, 2022; Logistic Trucks Time', tx: [433, 651.3], ty: 811, plot: [418.3, 830.8, 689.7, 986.8], lx: 411, avg: 960,
    ticks: ['0:00', '2:24', '4:48', '7:12', '9:36', '12:00', '14:24', '16:48', '19:12'], bars: at({ 12: 131 }) },
];
const weekend = [
  { box: [27, 1200, 316, 73], legend: [[DC, 86, 1260, 251.7]] },
  { box: [386, 1200, 315, 72], legend: [[LA, 449, 1259.5, 623]] },
  { box: [27, 1300, 675, 254], title: 'Sat, July 2, 2022; Chip Trucks Time', tx: [272.7, 453], ty: 1315, plot: [54.3, 1334.8, 691, 1510.8], lx: 47, avg: 1460, bw: 9,
    ticks: ['0:00', '0:14', '0:28', '0:43', '0:57', '1:12', '1:26', '1:40'], bars: at({ 1: 39, 3: 34, 4: 44, 5: 30, 6: 39, 8: 39, 12: 33, 15: 45, 19: 43, 21: 150 }),
    legend: [[AW, 179, 1540, 359, 1], [DC, 385, 1540, 551]] },
  { box: [27, 1580, 676, 268], title: 'Sun, July 3, 2022; Chip Trucks Time', tx: [271, 455], ty: 1595, plot: [54.3, 1614.8, 691.4, 1803.8], lx: 47, avg: 1654, bw: 9,
    ticks: ['0:00', '0:02', '0:05', '0:08', '0:11', '0:14', '0:17', '0:20', '0:23', '0:25', '0:28'], bars: at({ 1: 123, 10: 138, 12: 175, 13: 128, 16: 175, 23: 157 }),
    legend: [[AW, 180, 1833.5, 359, 1], [DC, 385, 1833.5, 551]] },
];

const block = (x, y, w, h) => `<div class="fillblock" style="left:${x}px;top:${y}px;width:${w}px;height:${h}px"></div>`;
const sheetTabs = [['Week 26 2022 Numbers', 167, 140, 'sep'], ['Week 26 2022 Time', 144, 119, 'sel'], ['Week 26 2022', 108, 82, ''], ['Mon, June 27th, 2022', 156, 123, 'sep'],
  ['Tue, June 28th, 2022', 151, 118, 'sep'], ['Wed, June 29th, 2022', 156, 124, 'sep'], ['Thu, June 30th,', 103, 84, 'sep cut']];
const bottom = full => `<div class="tabs"><div class="nav"><i class="p"></i><i class="n"></i></div>
  ${sheetTabs.slice(0, full ? 7 : 5).map(([t, w, tw, c]) => `<div class="tab ${c}" style="width:${w}px">${label(t, tw)}</div>`).join('')}
  ${full ? `<div class="dots">...</div><div class="add">${icon('plus', 18)}</div><div class="grip"><i></i></div><div class="scroll"><span><i></i></span><span></span></div>` : ''}</div>
  <div class="status">${label('Ready', 30)}${icon('macro', 13)}</div>`;

const [first, second] = document.querySelectorAll('.window');
first.innerHTML = taskbar(16) + title(true) + menu() + ribbon(true) + formula(first.dataset.cell, 32) + cols(letters, 'A.') +
  `<div class="grid">${rows(1, 16)}<div class="sheet">${block(0, 0, 1080, 546)}${block(0, 546, 720, 90)}${week.map(c => chart(c, [26, 250])).join('')}</div></div>` + bottom(true);
second.innerHTML = taskbar(14) + title(false) + menu() + ribbon(false) + formula(second.dataset.cell, 28) + cols(letters.slice(0, 17), '') +
  `<div class="grid">${rows(97, 126)}<div class="sheet">${block(0, 0, 720, 616)}${weekend.map(c => chart(c, [27, 1259])).join('')}<div class="outside"></div></div></div>` + bottom(false);

document.querySelectorAll('.fit').forEach(el => {
  const n = el.textContent.length, w = +el.dataset.w;
  el.style.letterSpacing = ((w - el.getBoundingClientRect().width) / n).toFixed(3) + 'px';
});
```
